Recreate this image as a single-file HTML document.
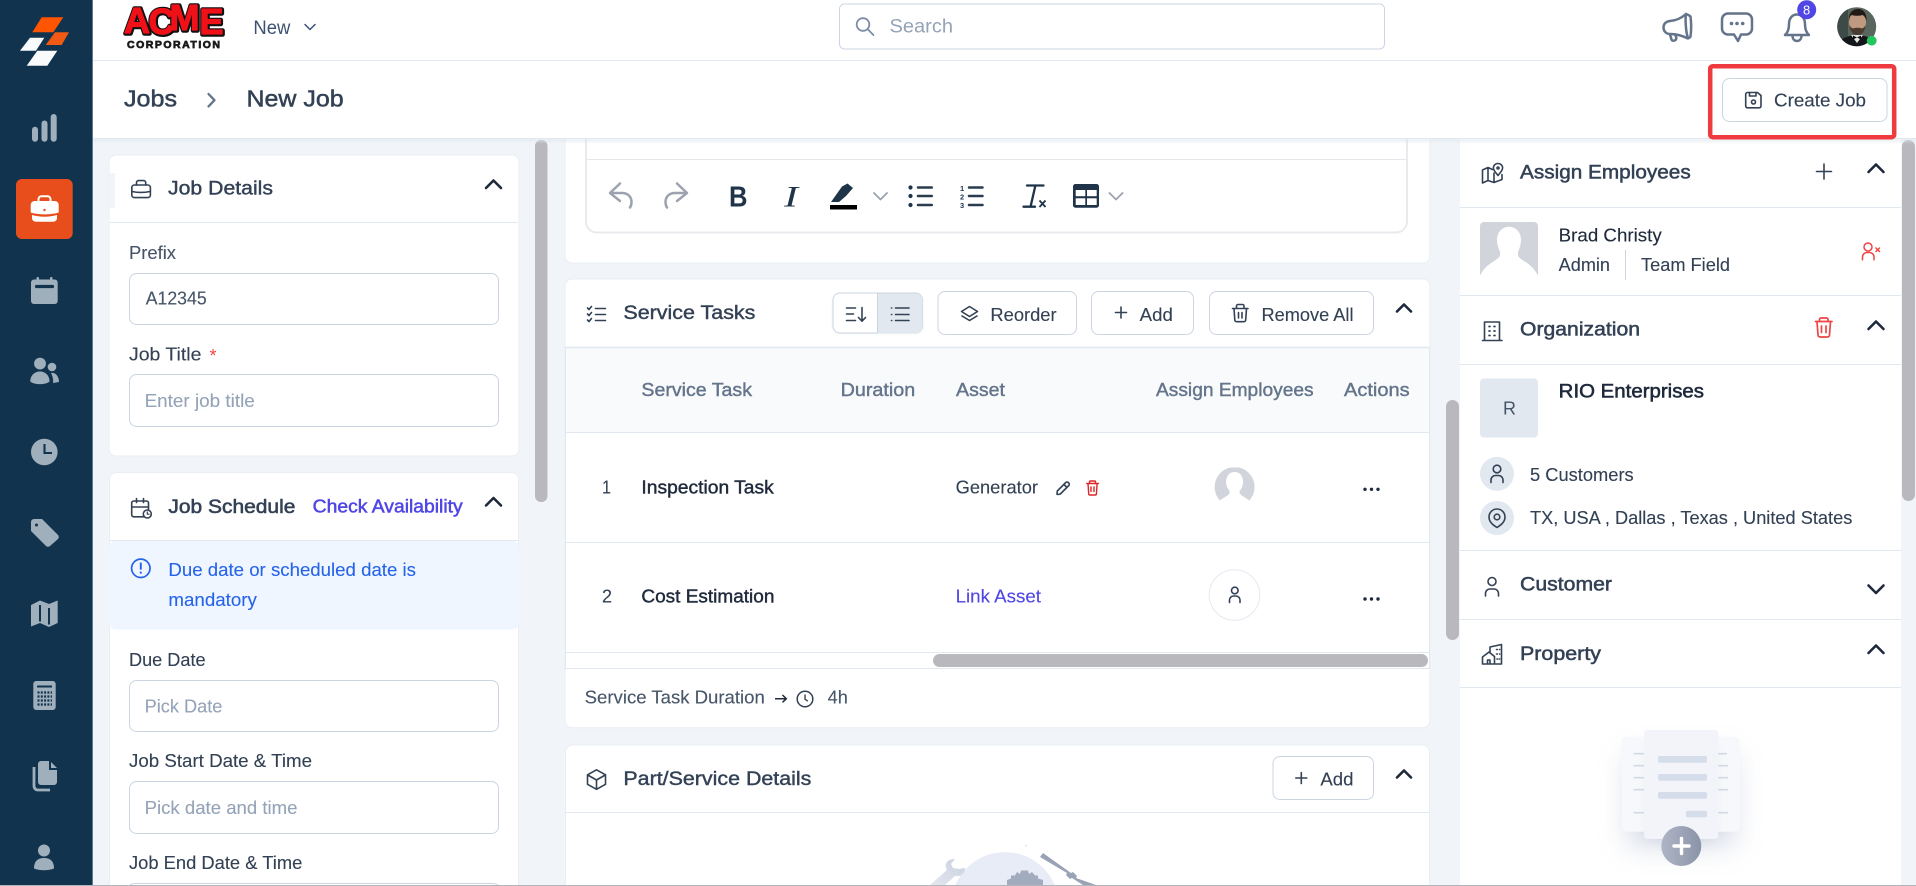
<!DOCTYPE html>
<html lang="en"><head><meta charset="utf-8"><title>New Job</title>
<style>
html,body{margin:0;padding:0;width:1916px;height:886px;overflow:hidden;background:#f1f5f9}
svg{display:block}
text{font-family:"Liberation Sans",sans-serif;white-space:pre}
.h{font-size:19px;fill:#334155;stroke:#334155;stroke-width:.4}
.l{font-size:18px;fill:#475569;stroke:#475569;stroke-width:.12}
.p{font-size:18px;fill:#94a3b8;stroke:#94a3b8;stroke-width:.1}
.b{font-size:18px;fill:#334155;stroke:#334155;stroke-width:.12}
.th{font-size:18px;fill:#64748b;stroke:#64748b;stroke-width:.4}
.td{font-size:18px;fill:#1e293b;stroke:#1e293b;stroke-width:.42}
.ic{fill:none;stroke:#334155;stroke-width:1.6;stroke-linecap:round;stroke-linejoin:round}
.ch{fill:none;stroke:#1e293b;stroke-width:2.6;stroke-linecap:round;stroke-linejoin:round}
.in{fill:#fff;stroke:#cbd5e1;stroke-width:1}
.bt{fill:#fff;stroke:#cbd5e1;stroke-width:1}
.ln{stroke:#e2e8f0;stroke-width:1}
.sb{fill:#b8b8bd}
.nav{fill:#9fb0bc}
</style></head>
<body>
<svg xmlns="http://www.w3.org/2000/svg" width="1916" height="886" viewBox="0 0 1916 886">
<defs>
<filter id="blur" x="-60%" y="-60%" width="220%" height="220%"><feGaussianBlur stdDeviation="14"/></filter>
<filter id="blur2" x="-50%" y="-50%" width="200%" height="200%"><feGaussianBlur stdDeviation="6"/></filter>
<filter id="soft" x="-30%" y="-30%" width="160%" height="160%"><feGaussianBlur stdDeviation="1.5"/></filter>
<clipPath id="av"><circle cx="1856.7" cy="26.7" r="19.5"/></clipPath>
<clipPath id="rowav"><rect x="1210" y="467.5" width="50" height="33.5"/></clipPath>
<linearGradient id="plusg" x1="0" x2="1" y1="0" y2="0"><stop offset="0" stop-color="#aeb5c6"/><stop offset="1" stop-color="#8b93a7"/></linearGradient>
<linearGradient id="wr" x1="1" x2="0" y1="0" y2="1"><stop offset="0" stop-color="#c9d0df"/><stop offset="1" stop-color="#e3e7f0"/></linearGradient>
</defs>

<rect width="1916" height="886" fill="#f1f5f9"/>

<!-- LEFT COLUMN -->
<g id="left-column">
<rect x="109" y="155" width="410" height="301" rx="7" fill="#fff" stroke="#e9eef4"/>
<rect x="109" y="173" width="6" height="35" fill="#f1f5f9"/>
<line class="ln" x1="110" x2="518" y1="222.5" y2="222.5"/>
<g class="ic"><rect x="131.8" y="185" width="18.6" height="12.6" rx="2.6"/><path d="M136.5 185v-2.4a2 2 0 0 1 2-2h5.2a2 2 0 0 1 2 2v2.4M132 191.5c6 1.3 12 1.3 18 0"/></g>
<text class="h" x="168" y="194.5" textLength="105" lengthAdjust="spacingAndGlyphs">Job Details</text>
<path class="ch" d="M486 188l7.5-7.500 7.500 7.500"/>
<text class="l" x="129" y="258.8" textLength="47" lengthAdjust="spacingAndGlyphs">Prefix</text>
<rect class="in" x="129.500" y="273.500" width="369" height="51" rx="7"/>
<text class="l" x="145.700" y="304.500" textLength="61" lengthAdjust="spacingAndGlyphs">A12345</text>
<text class="b" x="129" y="360.700" textLength="72.400" lengthAdjust="spacingAndGlyphs">Job Title</text>
<text x="209.500" y="362" style="font-size:18px;fill:#ef4444">*</text>
<rect class="in" x="129.500" y="374.500" width="369" height="52" rx="7"/>
<text class="p" x="144.600" y="407" textLength="110.200" lengthAdjust="spacingAndGlyphs">Enter job title</text>

<path d="M109.500 886V479.500a7 7 0 0 1 7-7h395a7 7 0 0 1 7 7V886z" fill="#fff" stroke="#e9eef4"/>
<g class="ic"><rect x="131.700" y="501" width="16.800" height="15.800" rx="2"/><path d="M131.700 507h16.800M136.500 498.500v4M143.500 498.500v4"/><circle cx="147.300" cy="514" r="4" fill="#fff"/><path d="M147.300 512v2.200h1.800" stroke-width="1.200"/></g>
<text class="h" x="168.400" y="513" textLength="127" lengthAdjust="spacingAndGlyphs" style="stroke-width:.55">Job Schedule</text>
<text x="312.700" y="512.300" textLength="150" lengthAdjust="spacingAndGlyphs" style="font-size:18px;fill:#4f46e5;stroke:#4f46e5;stroke-width:.5">Check Availability</text>
<path class="ch" d="M486 505.500l7.500-7.500 7.500 7.500"/>
<line class="ln" x1="110" x2="518" y1="540.500" y2="540.500"/>
<rect x="109" y="541" width="410" height="88.600" rx="7" fill="#eff6ff"/>
<circle cx="140.800" cy="568.300" r="9.200" fill="none" stroke="#2563eb" stroke-width="1.700"/>
<path d="M140.800 563.300v5.600" stroke="#2563eb" stroke-width="1.900" stroke-linecap="round"/><circle cx="140.800" cy="572.600" r="1.100" fill="#2563eb"/>
<text x="168.400" y="576" textLength="247.600" lengthAdjust="spacingAndGlyphs" style="font-size:18px;fill:#2563eb;stroke:#2563eb;stroke-width:.1">Due date or scheduled date is</text>
<text x="168.400" y="605.900" textLength="88.500" lengthAdjust="spacingAndGlyphs" style="font-size:18px;fill:#2563eb;stroke:#2563eb;stroke-width:.1">mandatory</text>
<text class="b" x="129" y="665.900" textLength="76.600" lengthAdjust="spacingAndGlyphs">Due Date</text>
<rect class="in" x="129.500" y="680.500" width="369" height="51" rx="7"/>
<text class="p" x="144.600" y="712.300" textLength="77.800" lengthAdjust="spacingAndGlyphs">Pick Date</text>
<text class="b" x="129" y="766.800" textLength="183" lengthAdjust="spacingAndGlyphs">Job Start Date &amp; Time</text>
<rect class="in" x="129.500" y="781.500" width="369" height="52" rx="7"/>
<text class="p" x="144.600" y="814" textLength="152.900" lengthAdjust="spacingAndGlyphs">Pick date and time</text>
<text class="b" x="129" y="868.800" textLength="173.300" lengthAdjust="spacingAndGlyphs">Job End Date &amp; Time</text>
<path d="M129.500 885.500a7 3 0 0 1 7-2h355a7 3 0 0 1 7 2" fill="#fff" stroke="#cbd5e1"/>
<rect class="sb" x="535" y="140" width="12.500" height="362" rx="6"/>
</g>

<!-- CENTER COLUMN -->
<g id="center-column">
<rect x="565" y="120" width="865" height="143" rx="7" fill="#fff" stroke="#e9eef4"/>
<rect x="586" y="120" width="821" height="112.500" rx="11" fill="#fff" stroke="#e8eaed" stroke-width="2"/>
<line x1="587" x2="1406" y1="159.500" y2="159.500" stroke="#e5e7eb"/>
<g fill="none" stroke="#9ca3af" stroke-width="2.500" stroke-linecap="round" stroke-linejoin="round">
<path d="M620 183.500L610 193l10 8M611 193h11c6 0 9.500 4 9.500 9 0 2-.5 4-1.500 5.500"/>
<path d="M677 183.500L687 193l-10 8M686 193h-11c-6 0-9.500 4-9.500 9 0 2 .5 4 1.500 5.500"/>
<path d="M874 193l6.500 6.500 6.500-6.500M1109.500 193l6.500 6.500 6.500-6.500" stroke-width="1.800"/>
</g>
<text x="729" y="206.500" textLength="18.500" lengthAdjust="spacingAndGlyphs" style="font-size:29px;font-weight:700;fill:#1f3349">B</text>
<text x="784" y="206.500" textLength="14" lengthAdjust="spacingAndGlyphs" style="font-family:'Liberation Serif',serif;font-style:italic;font-size:30px;fill:#1f3349">I</text>
<path d="M831 202L842 186.500 847.500 183.500 853 188 846 196 839 202z" fill="#1f3349"/>
<rect x="830" y="205" width="27" height="4.500" fill="#000"/>
<g fill="#1f3349">
<circle cx="910.500" cy="187.500" r="2.100"/><circle cx="910.500" cy="196" r="2.100"/><circle cx="910.500" cy="205" r="2.100"/>
</g>
<path d="M918 187.500h13.800M918 196h13.800M918 205h13.800M969 187.500h13.500M969 196h13.500M969 205h13.500" stroke="#2a3c50" stroke-width="2.500" fill="none" stroke-linecap="round"/>
<text x="960" y="191" style="font-size:7.500px;font-weight:700;fill:#1f3349">1</text>
<text x="960" y="199.500" style="font-size:7.500px;font-weight:700;fill:#1f3349">2</text>
<text x="960" y="208" style="font-size:7.500px;font-weight:700;fill:#1f3349">3</text>
<path d="M1027 185.500h16.500M1035.400 185.500L1030.700 206M1023.500 206.700h11.500" stroke="#1f3349" stroke-width="2.300" fill="none" stroke-linecap="round"/>
<path d="M1039.500 200.500l6 6.500M1045.500 200.500l-6 6.500" stroke="#1f3349" stroke-width="1.800" fill="none"/>
<rect x="1073" y="184" width="26" height="23.700" rx="2.500" fill="#1f3349"/>
<g fill="#fff"><rect x="1075.700" y="190" width="9.600" height="6.200"/><rect x="1087" y="190" width="9.700" height="6.200"/><rect x="1075.700" y="198.300" width="9.600" height="6.700"/><rect x="1087" y="198.300" width="9.700" height="6.700"/></g>

<rect x="565" y="279" width="865" height="448.700" rx="7" fill="#fff" stroke="#e9eef4"/>
<g class="ic" stroke-width="1.400"><path d="M587.500 308l1.500 1.500 2.500-3M587.500 314l1.500 1.500 2.500-3M587.500 320l1.500 1.500 2.500-3M595.500 308.500h10M595.500 314.500h10M595.500 320.500h10"/></g>
<text class="h" x="623.400" y="318.800" textLength="132" lengthAdjust="spacingAndGlyphs">Service Tasks</text>
<rect x="833" y="295" width="89.500" height="38" rx="7" fill="#cbd5e1" opacity=".5" filter="url(#soft)"/>
<rect x="833" y="293" width="89.500" height="40" rx="7" fill="#fff" stroke="#cbd5e1"/>
<path d="M878 293.500h37.500a7 7 0 0 1 7 7v26a7 7 0 0 1-7 7h-37.500z" fill="#e2e8f0"/>
<line x1="877.500" x2="877.500" y1="293" y2="333" stroke="#cbd5e1"/>
<g class="ic" stroke-width="1.500">
<path d="M846.500 308h9M846.500 314h7M846.500 320.500h9M862 307.500v13.500M858.500 317.500l3.500 3.700 3.500-3.700"/>
<path d="M895.500 308h13.500M895.500 314.500h13.500M895.500 320.500h13.500M891.500 308h.2M891.500 314.500h.2M891.500 320.500h.2"/>
</g>
<rect class="bt" x="938" y="291.500" width="138.500" height="43" rx="7"/>
<g class="ic" stroke-width="1.500"><path d="M969.500 306.500l8 5-8 5-8-5zM962 316l7.500 4.500 7.500-4.500"/></g>
<text class="b" x="990.400" y="321.200" textLength="66.200" lengthAdjust="spacingAndGlyphs">Reorder</text>
<rect class="bt" x="1091.500" y="291.500" width="102" height="43" rx="7"/>
<path class="ic" d="M1121 307v11M1115.500 312.500h11" stroke-width="1.300"/>
<text class="b" x="1139.700" y="321.200" textLength="33.100" lengthAdjust="spacingAndGlyphs">Add</text>
<rect class="bt" x="1209.500" y="291.500" width="164" height="43" rx="7"/>
<g class="ic" stroke-width="1.500"><path d="M1232.500 308.500h15.500M1236.500 308.500v-2.500a1.500 1.500 0 0 1 1.500-1.500h4.500a1.500 1.500 0 0 1 1.500 1.500v2.500M1234 308.500l.8 11.500a1.800 1.800 0 0 0 1.800 1.700h7.300a1.800 1.800 0 0 0 1.800-1.700l.8-11.500M1238.500 312.500v5.500M1242 312.500v5.500"/></g>
<text class="b" x="1261.500" y="321.200" textLength="92" lengthAdjust="spacingAndGlyphs">Remove All</text>
<path class="ch" d="M1397 311.500l7-7 7 7"/>

<rect x="565.500" y="347" width="864" height="85.500" fill="#f8fafc"/>
<line x1="565" x2="1430" y1="347.500" y2="347.500" stroke="#e2e8f0" stroke-width="1.500"/>
<line class="ln" x1="565" x2="1430" y1="432.500" y2="432.500"/>
<line class="ln" x1="565.500" x2="565.500" y1="347" y2="668"/>
<line class="ln" x1="1429.500" x2="1429.500" y1="347" y2="668"/>
<text class="th" x="641.400" y="395.800" textLength="110.600" lengthAdjust="spacingAndGlyphs">Service Task</text>
<text class="th" x="840.600" y="395.800" textLength="74.600" lengthAdjust="spacingAndGlyphs">Duration</text>
<text class="th" x="956" y="395.800" textLength="49" lengthAdjust="spacingAndGlyphs">Asset</text>
<text class="th" x="1156" y="395.800" textLength="157.600" lengthAdjust="spacingAndGlyphs">Assign Employees</text>
<text class="th" x="1344" y="395.800" textLength="65.600" lengthAdjust="spacingAndGlyphs">Actions</text>

<text class="b" x="602" y="493.500" textLength="9" lengthAdjust="spacingAndGlyphs">1</text>
<text class="td" x="641.400" y="493.500" textLength="132.400" lengthAdjust="spacingAndGlyphs">Inspection Task</text>
<text class="b" x="955.600" y="493.500" textLength="82.400" lengthAdjust="spacingAndGlyphs">Generator</text>
<path class="ic" stroke-width="1.300" d="M1058 494.500l-1-.3.300-3.200 8.500-8.500a1.700 1.700 0 0 1 2.400 0l.6.600a1.700 1.700 0 0 1 0 2.400l-8.500 8.500zM1064 484.500l3 3"/>
<g fill="none" stroke="#dc2626" stroke-width="1.400" stroke-linecap="round" stroke-linejoin="round"><path d="M1086.800 483.500h11.500M1089.500 483.500v-1.500a1 1 0 0 1 1-1h4a1 1 0 0 1 1 1v1.500M1088 483.500l.7 10.500a1.200 1.200 0 0 0 1.200 1h5.300a1.200 1.200 0 0 0 1.200-1l.7-10.500M1091 487v4.500M1094 487v4.500"/></g>
<g clip-path="url(#rowav)"><circle cx="1234.600" cy="487" r="20" fill="#d1d5db"/><path d="M1234.600 472c6 0 8.500 5 8.500 10 0 4-2 7-3.500 9v2c1 3 8 5 11 9h-32c3-4 10-6 11-9v-2c-1.500-2-3.500-5-3.500-9 0-5 2.500-10 8.500-10z" fill="#fff"/></g>
<g fill="#1e293b"><circle cx="1365" cy="489.300" r="1.700"/><circle cx="1371.500" cy="489.300" r="1.700"/><circle cx="1378" cy="489.300" r="1.700"/></g>
<line class="ln" x1="565" x2="1430" y1="542.500" y2="542.500"/>

<text class="b" x="602" y="602.500" textLength="10" lengthAdjust="spacingAndGlyphs">2</text>
<text class="td" x="641.400" y="602.500" textLength="133" lengthAdjust="spacingAndGlyphs">Cost Estimation</text>
<text class="b" x="955.600" y="602.500" textLength="85.400" lengthAdjust="spacingAndGlyphs" style="fill:#4f46e5;stroke:#4f46e5">Link Asset</text>
<circle cx="1234.500" cy="595" r="25.300" fill="#fff" stroke="#e5e9ef"/>
<g class="ic" stroke-width="1.400"><circle cx="1234.800" cy="590.500" r="3.300"/><path d="M1229.500 602.500v-2.500a4 4 0 0 1 4-4h2.500a4 4 0 0 1 4 4v2.500"/></g>
<g fill="#1e293b"><circle cx="1365" cy="599" r="1.700"/><circle cx="1371.500" cy="599" r="1.700"/><circle cx="1378" cy="599" r="1.700"/></g>
<line class="ln" x1="565" x2="1430" y1="652.500" y2="652.500"/>
<rect class="sb" x="933" y="654" width="495" height="13" rx="6.500"/>
<line class="ln" x1="565" x2="1430" y1="668.500" y2="668.500"/>
<text class="l" x="584.700" y="703.700" textLength="180.100" lengthAdjust="spacingAndGlyphs">Service Task Duration</text>
<path d="M775 698.700h11M782.500 695l3.800 3.700-3.800 3.700" fill="none" stroke="#1e293b" stroke-width="1.500"/>
<circle cx="805" cy="699" r="7.800" fill="none" stroke="#334155" stroke-width="1.500"/>
<path d="M805 694.500v4.700l2.800 2" fill="none" stroke="#334155" stroke-width="1.400"/>
<text class="l" x="827.700" y="703.700" textLength="20.200" lengthAdjust="spacingAndGlyphs">4h</text>

<path d="M565.500 886V752a7 7 0 0 1 7-7h850a7 7 0 0 1 7 7v134z" fill="#fff" stroke="#e9eef4"/>
<g class="ic" stroke-width="1.500"><path d="M596.500 769.800l9 5v9.500l-9 5-9-5v-9.500zM587.700 775l8.800 5 8.800-5M596.500 780v9"/></g>
<text class="h" x="623.400" y="785" textLength="188" lengthAdjust="spacingAndGlyphs">Part/Service Details</text>
<rect class="bt" x="1273" y="756.500" width="100.500" height="43" rx="7"/>
<path class="ic" d="M1301.300 772.500v11M1295.800 778h11" stroke-width="1.300"/>
<text class="b" x="1320.400" y="785.700" textLength="33.100" lengthAdjust="spacingAndGlyphs">Add</text>
<path class="ch" d="M1397 777.500l7-7 7 7"/>
<line class="ln" x1="565" x2="1430" y1="812.500" y2="812.500"/>
<!-- empty-state illustration -->
<path d="M955.300 885A54 54 0 0 1 1054.700 885z" fill="#e8ecf6"/>
<path d="M930 885l17-15c-3-5-1-11 8-11l-4 5 2 4 6 1 6-1c0 6-5 9-10 8l-10 9z" fill="url(#wr)"/>
<path d="M1007 885v-5l4-1.500v-3h4l2-3.500 3 2 1-3.500h7l1 3.500 3-2 3 3.500h3v3l5 1.500v5z" fill="#a3abbe"/>
<path d="M1040 857l3-4 28 20 2-1 4 4-1 2 20 7h-13l-11-7-2 1-4-4 1-2z" fill="#9aa3b6"/>
<circle cx="1026" cy="845.500" r="1" fill="#e1e5ef"/>
</g>

<!-- RIGHT COLUMN -->
<g id="right-column">
<rect class="sb" x="1446" y="400" width="13" height="240" rx="6.500"/>
<rect x="1460" y="130" width="441" height="756" fill="#fff"/>
<rect class="sb" x="1902" y="140" width="13" height="361" rx="6.500"/>
<g class="ic" stroke-width="1.500"><path d="M1482.500 170l5.500-2.500 4.500 2M1482.500 170v13l5.500-2.500 6 2 8-3v-5M1488 167.500v13M1494 173v9.500"/><path d="M1498 163.500c2.800 0 4.600 2 4.600 4.300 0 3-2.600 5-4.600 7.700-2-2.700-4.600-4.700-4.600-7.700 0-2.300 1.800-4.300 4.600-4.300z"/><circle cx="1498" cy="168" r="1"/></g>
<text class="h" x="1520" y="178.500" textLength="170.700" lengthAdjust="spacingAndGlyphs" style="stroke-width:.5">Assign Employees</text>
<path class="ic" d="M1824 164v15M1816.500 171.500h15" stroke-width="1.700"/>
<path class="ch" d="M1868.500 172l7.500-7.500 7.500 7.500"/>
<line class="ln" x1="1460" x2="1901" y1="207.500" y2="207.500"/>
<rect x="1480" y="222" width="58" height="57" rx="4" fill="#d1d5db"/>
<path d="M1509 226.700c7 0 12 6 12 13 0 5-2 10-3 12v4c2 5 14 7 20 20v3l-1 1h-56l-1-1v-3c6-13 18-15 20-20v-4c-1-2-3-7-3-12 0-7 5-13 12-13z" fill="#fff"/>
<text x="1558.700" y="241.700" textLength="103" lengthAdjust="spacingAndGlyphs" style="font-size:18px;fill:#1e293b;stroke:#1e293b;stroke-width:.12">Brad Christy</text>
<text class="b" x="1558.700" y="271.200" textLength="51.300" lengthAdjust="spacingAndGlyphs">Admin</text>
<line x1="1625.500" x2="1625.500" y1="250" y2="280" stroke="#cbd5e1"/>
<text class="b" x="1641" y="271.200" textLength="89" lengthAdjust="spacingAndGlyphs">Team Field</text>
<g fill="none" stroke="#ef4444" stroke-width="1.500" stroke-linecap="round"><circle cx="1868" cy="247" r="4"/><path d="M1862.500 259.800v-2.800a4.500 4.500 0 0 1 4.500-4.500h2.500a4.500 4.500 0 0 1 4.500 4.500v2.800M1876 248l3.500 3.500M1879.500 248l-3.500 3.500"/></g>
<line class="ln" x1="1460" x2="1901" y1="295.500" y2="295.500"/>

<g class="ic" stroke-width="1.500"><path d="M1484.500 340.500v-18.500h15v18.500M1482.500 340.500h19.500"/><path d="M1489 326.500h1M1494 326.500h1M1489 331h1M1494 331h1M1489 335.500h1M1494 335.500h1" stroke-width="1.700"/></g>
<text class="h" x="1520" y="335.300" textLength="120" lengthAdjust="spacingAndGlyphs" style="stroke-width:.5">Organization</text>
<g fill="none" stroke="#ef4444" stroke-width="1.700" stroke-linecap="round" stroke-linejoin="round"><path d="M1815.500 321.500h16.500M1819.500 321.500v-2a1.500 1.500 0 0 1 1.500-1.500h5.500a1.500 1.500 0 0 1 1.500 1.500v2M1817 321.500l1 13.500a2 2 0 0 0 2 2h7.500a2 2 0 0 0 2-2l1-13.500M1821.500 326v6.500M1826 326v6.500"/></g>
<path class="ch" d="M1868.500 329l7.500-7.500 7.500 7.500"/>
<line class="ln" x1="1460" x2="1901" y1="364.500" y2="364.500"/>
<rect x="1480" y="378.500" width="58" height="59" rx="4" fill="#e2e8f0"/>
<text x="1503" y="414.500" style="font-size:18px;fill:#475569">R</text>
<text x="1558.700" y="397.300" textLength="145.300" lengthAdjust="spacingAndGlyphs" style="font-size:19px;fill:#1e293b;stroke:#1e293b;stroke-width:.55">RIO Enterprises</text>
<circle cx="1497" cy="473.800" r="17" fill="#e2e8f0"/>
<g class="ic" stroke-width="1.500"><circle cx="1497" cy="469" r="3.800"/><path d="M1491 482.500v-2.500a4.500 4.500 0 0 1 4.500-4.500h3a4.500 4.500 0 0 1 4.500 4.500v2.500"/></g>
<text class="b" x="1530" y="481" textLength="103.700" lengthAdjust="spacingAndGlyphs">5 Customers</text>
<circle cx="1497" cy="518" r="17" fill="#e2e8f0"/>
<g class="ic" stroke-width="1.900"><path d="M1497 527.500c-4-2.500-8-5.500-8-10.500a8 8 0 0 1 16 0c0 5-4 8-8 10.500z"/><circle cx="1497" cy="517" r="2.800"/></g>
<text class="b" x="1530" y="524" textLength="322.300" lengthAdjust="spacingAndGlyphs">TX, USA , Dallas , Texas , United States</text>
<line class="ln" x1="1460" x2="1901" y1="550.500" y2="550.500"/>

<g class="ic" stroke-width="1.500"><circle cx="1492" cy="581.500" r="4"/><path d="M1485.500 596v-2.500a4.500 4.500 0 0 1 4.500-4.500h4a4.500 4.500 0 0 1 4.500 4.500v2.500"/></g>
<text class="h" x="1520" y="590.700" textLength="92" lengthAdjust="spacingAndGlyphs" style="stroke-width:.5">Customer</text>
<path class="ch" d="M1868.500 585.500l7.500 7.500 7.500-7.500"/>
<line class="ln" x1="1460" x2="1901" y1="619.500" y2="619.500"/>
<g class="ic" stroke-width="1.500"><path d="M1490 652v-5l11.500-2.500v19.500h-19v-7l6.500-5 5.500 4.500v7.500M1487.500 664v-4h2.500v4M1496.500 649.500h.8M1499.500 649.500h.2M1496.500 654h.8M1499.500 654h.2M1497 659h.8M1499.500 659h.2"/></g>
<text class="h" x="1520" y="659.800" textLength="81" lengthAdjust="spacingAndGlyphs" style="stroke-width:.5">Property</text>
<path class="ch" d="M1868.500 653l7.500-7.500 7.500 7.500"/>
<line class="ln" x1="1460" x2="1901" y1="687.500" y2="687.500"/>
<!-- property illustration -->
<rect x="1628" y="755" width="106" height="90" fill="#a9b3cb" opacity=".5" filter="url(#blur)"/>
<rect x="1621.700" y="736.700" width="118.300" height="95" rx="5" fill="#f7f8fb"/>
<path d="M1633.500 753.700h11M1633.500 765.700h11M1633.500 777.700h11M1633.500 789.700h11M1633.500 812.700h11M1718 753.700h9M1718 765.700h10M1718 777.700h10M1718 789.700h10M1718 812.700h10" stroke="#d3dae7" stroke-width="1.700"/>
<rect x="1650" y="745" width="62" height="94" fill="#a9b3cb" opacity=".35" filter="url(#blur2)"/>
<rect x="1644" y="730" width="74.300" height="109" rx="3.500" fill="#f2f4f9"/>
<g fill="#d5dcea"><rect x="1658" y="756" width="49" height="6.700" rx="2"/><rect x="1658" y="774" width="49" height="6.700" rx="2"/><rect x="1658" y="792" width="49" height="6.700" rx="2"/><rect x="1686" y="810.700" width="21" height="6.700" rx="2"/></g>
<circle cx="1681.300" cy="846" r="20" fill="url(#plusg)"/>
<path d="M1681.500 838.500v15M1674 846h15" stroke="#fff" stroke-width="3.400" stroke-linecap="round"/>
</g>

<!-- TOP BARS -->
<g id="topbars">
<rect x="93" y="138" width="1823" height="4" fill="#dfe5ec" opacity=".6" filter="url(#soft)"/>
<rect x="93" y="0" width="1823" height="138" fill="#fff"/>
<line class="ln" x1="93" x2="1916" y1="60.500" y2="60.500"/>
<line class="ln" x1="93" x2="1916" y1="138.500" y2="138.500"/>

<text x="124.500 149 170 200" y="33.500 34.500 30.500 34.500" aria-hidden="true" style="font-size:36px;font-weight:700;fill:#111;stroke:#111;stroke-width:4.500;stroke-linejoin:round">ACME</text>
<text x="124 148.500 169.500 199.500" y="33 34 30 34" style="font-size:36px;font-weight:700;fill:#ef1018;stroke:#ef1018;stroke-width:1.200;stroke-linejoin:round">ACME</text>
<text x="127" y="48" textLength="93" lengthAdjust="spacing" style="font-size:10.500px;font-weight:700;fill:#1a1a1a;stroke:#1a1a1a;stroke-width:.7">CORPORATION</text>
<text x="253.400" y="34" textLength="36.900" lengthAdjust="spacingAndGlyphs" style="font-size:19px;fill:#3b5272">New</text>
<path d="M305 24.500l5 5 5-5" fill="none" stroke="#3b5272" stroke-width="1.500" stroke-linecap="round"/>

<rect x="839.500" y="4" width="545" height="45" rx="5" fill="#fff" stroke="#cbd5e1"/>
<circle cx="863" cy="24.500" r="6.300" fill="none" stroke="#7c8da5" stroke-width="1.800"/>
<path d="M867.700 29.300l5.700 5.700" stroke="#7c8da5" stroke-width="1.800" stroke-linecap="round"/>
<text x="889.500" y="32.500" textLength="63.500" lengthAdjust="spacingAndGlyphs" style="font-size:19px;fill:#94a3b8">Search</text>

<g fill="none" stroke="#64748b" stroke-width="2.500" stroke-linecap="round" stroke-linejoin="round">
<path d="M1686 14c-5 4.500-10 6.500-16 7-4 .3-6.500 3-6.500 6.500s2.500 6.500 6.500 6.500c6 0 12 1.500 18 4.500"/>
<path d="M1686 14c3 1 4 2 4.500 2.500.8 6 .8 14 0 20-.5 1-1.500 1.700-2.500 1.500-2-5-3-18-2-24z"/>
<path d="M1670 34.500l1.500 5c.5 1.500 3 1.500 4 .5s1-2 .5-3.500l-1-2"/>
<path d="M1728 13.500h18a6 6 0 0 1 6 6v9a6 6 0 0 1-6 6h-5l-3 6.500-4-6.500h-6a6 6 0 0 1-6-6v-9a6 6 0 0 1 6-6z"/>
<path d="M1785 35c3-2.500 4-6 4-11 0-6 3.500-9.500 8-9.500s8 3.500 8 9.500c0 5 1 8.500 4 11z"/>
<path d="M1792.500 35.500c0 3.500 2 5.500 4.500 5.500s4.500-2 4.500-5.500"/>
</g>
<g fill="#64748b"><circle cx="1731.500" cy="23.500" r="1.800"/><circle cx="1737" cy="23.500" r="1.800"/><circle cx="1742.700" cy="23.500" r="1.800"/></g>
<circle cx="1806.700" cy="9.700" r="9.500" fill="#4f46e5"/>
<text x="1803" y="14.500" style="font-size:13px;fill:#fff">8</text>

<g clip-path="url(#av)">
<rect x="1836" y="6" width="42" height="42" fill="#59665e"/>
<rect x="1836" y="6" width="12" height="42" fill="#3d4a45"/>
<ellipse cx="1857" cy="49" rx="21" ry="14" fill="#14171a"/>
<path d="M1851 35l6 8 6-8z" fill="#e6e6e6"/>
<ellipse cx="1857.500" cy="22" rx="8.500" ry="11.500" fill="#c09a80"/>
<path d="M1849 21c-1-8 4-12 9-12s9 4 8.500 12c-1-3-2-5-4-6-3 1-8 1-10.500 0-2 1-2.500 2-3 6z" fill="#221a16"/>
<path d="M1849.500 25c.5 6 3 10 8 10s7.500-4 8-10c-1 2-2 3-3.500 3.500-2-1-7-1-9 0-1.500-.5-2.500-1.500-3.500-3.500z" fill="#4a3a30"/>
<path d="M1857 37.500l-4-2v4zM1857 37.500l4-2v4z" fill="#0b0b0b"/>
</g>
<circle cx="1871.700" cy="40.700" r="4.900" fill="#22c55e"/>

<text x="124" y="106.700" textLength="53" lengthAdjust="spacingAndGlyphs" style="font-size:23.500px;fill:#334155;stroke:#334155;stroke-width:.5">Jobs</text>
<path d="M208.500 94l6 6.200-6 6.200" fill="none" stroke="#64748b" stroke-width="2.300" stroke-linecap="round" stroke-linejoin="round"/>
<text x="246.500" y="106.700" textLength="97.200" lengthAdjust="spacingAndGlyphs" style="font-size:23.500px;fill:#334155;stroke:#334155;stroke-width:.5">New Job</text>

<rect class="bt" x="1722.500" y="78.500" width="164.500" height="43" rx="7"/>
<g class="ic" stroke-width="1.500"><path d="M1747.500 92.500h10l3.500 3v10.500a1.800 1.800 0 0 1-1.800 1.800h-11.700a1.800 1.800 0 0 1-1.800-1.800v-11.700a1.800 1.800 0 0 1 1.800-1.800z"/><path d="M1749.500 92.500v3.500h6.500v-3.500"/><circle cx="1753.500" cy="102" r="2"/></g>
<text x="1774" y="106.500" textLength="92" lengthAdjust="spacingAndGlyphs" style="font-size:18.500px;fill:#334155;stroke:#334155;stroke-width:.12">Create Job</text>
<rect x="1710.200" y="66.200" width="184" height="71" rx="2.500" fill="none" stroke="#ef3b3f" stroke-width="4.500"/>
</g>

<!-- SIDEBAR -->
<g id="sidebar">
<rect x="0" y="0" width="92" height="886" fill="#12334e"/>
<rect x="92" y="0" width="1" height="886" fill="#5d7a92"/>
<polygon points="41.700,17.300 63.300,17.300 53.300,32.300 32.300,32.300" fill="#ff5500"/>
<polygon points="55,32.300 69,32.300 61.700,45 45.700,45" fill="#f05a14"/>
<polygon points="30,37.700 44.300,37.700 36,50.700 20,50.700" fill="#f8fafc"/>
<polygon points="37.300,50.700 57.300,50.700 47.300,65.700 26.700,65.700" fill="#f8fafc"/>
<g class="nav">
<rect x="32" y="126.700" width="6" height="15" rx="3"/><rect x="41.500" y="120.500" width="6" height="21.200" rx="3"/><rect x="50.700" y="114" width="6" height="27.700" rx="3"/>
</g>
<rect x="16" y="179" width="56.700" height="60" rx="6" fill="#e84e1b"/>
<path d="M38.500 201.500v-2.300a3 3 0 0 1 3-3h6a3 3 0 0 1 3 3v2.300" fill="none" stroke="#fff" stroke-width="2"/>
<path d="M30.700 205a4 4 0 0 1 4-4h20a4 4 0 0 1 4 4v7.500c-8 2.500-20 2.500-28 0z" fill="#fff"/>
<path d="M32 215c8 2.300 17 2.300 25 0v3.200a3.500 3.500 0 0 1-3.500 3.500h-18a3.500 3.500 0 0 1-3.500-3.500z" fill="#fff"/>
<circle cx="44.500" cy="210" r="1.200" fill="#e84e1b"/>

<g class="nav">
<rect x="31" y="279.500" width="26.700" height="24.500" rx="3"/><rect x="36.500" y="277" width="2.500" height="5" rx="1"/><rect x="50" y="277" width="2.500" height="5" rx="1"/>
<circle cx="40" cy="363.600" r="5.900"/><path d="M30.300 381.500C30.300 375 35 371.500 40 371.500 45 371.500 49.500 375 49.500 381.500 46 385 34 385 30.300 381.500Z"/>
<circle cx="52" cy="367" r="4.300"/><path d="M51 373C56 372 59 377 59 382L53 383C53.500 379 52.500 376 51 373Z"/>
<circle cx="44.300" cy="452" r="13.300"/>
<path d="M31 522a3 3 0 0 1 3-3h8l16 16a3 3 0 0 1 0 4l-8 7a3 3 0 0 1-4 0l-15-15z"/>
<path d="M31 605l9-4.500 9 3.500 8.700-3.500v22.500l-8.700 4-9-4-9 3.500z"/>
<rect x="33.300" y="681" width="22.400" height="29" rx="3"/>
<path d="M41 761h8v9h8v12a3 3 0 0 1-3 3h-13a3 3 0 0 1-3-3v-18a3 3 0 0 1 3-3z"/><path d="M51 762l6 6h-6z"/>
<circle cx="44" cy="850.500" r="6"/><path d="M34 868.500c0-7.500 4-10.500 10-10.500s10 3 10 10.500c-5 2.300-15 2.300-20 0z"/>
</g>
<path d="M36.500 286.500h16" stroke="#12334e" stroke-width="3.200" stroke-linecap="round"/>
<path d="M44.500 444v9H52" fill="none" stroke="#12334e" stroke-width="2.100"/>
<circle cx="36.500" cy="525" r="1.500" fill="#12334e"/>
<path d="M40 605v16.500M49 608v16.500" stroke="#12334e" stroke-width="2"/>
<path d="M37 686.500h15" stroke="#12334e" stroke-width="2"/>
<path d="M37.500 692.500H52M37.500 696.500H52M37.500 700.500H52M37.500 704.500H52" stroke="#12334e" stroke-width="2.200" stroke-dasharray="2 1.300"/>
<path d="M34 767v19a4 4 0 0 0 4 4h12" fill="none" stroke="#9fb0bc" stroke-width="2.800"/>
</g>

<rect x="0" y="885" width="1916" height="1" fill="#b2b5ba"/>
</svg>
</body></html>
